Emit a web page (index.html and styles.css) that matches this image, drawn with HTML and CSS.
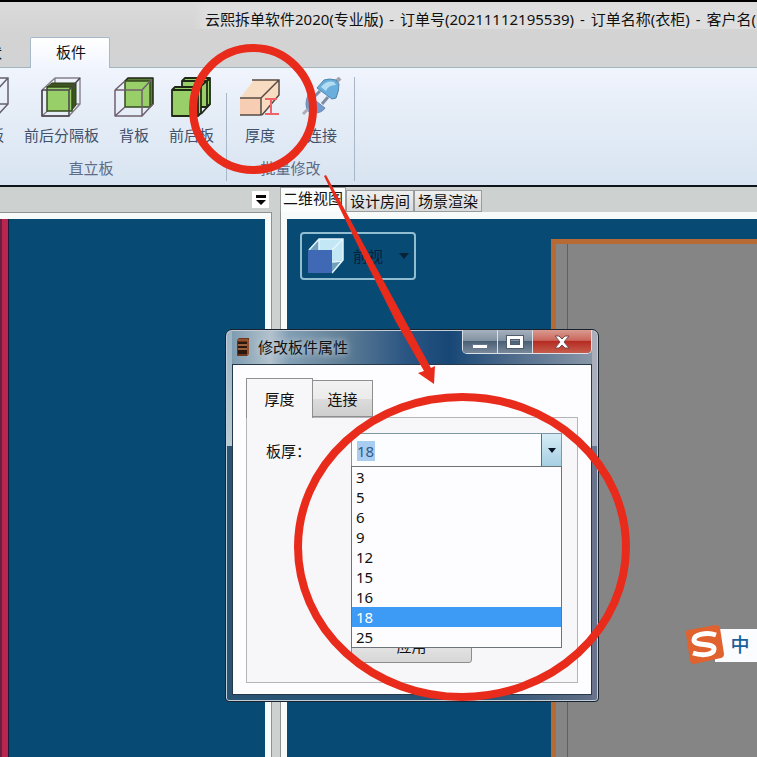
FILE: index.html
```html
<!DOCTYPE html>
<html lang="zh-CN">
<head>
<meta charset="utf-8">
<title>云熙拆单软件2020(专业版)</title>
<link rel="stylesheet" href="styles.css">
</head>
<body>
<div class="app">
  <header class="titlebar">
    <h1 class="app-title"><span class="title-glow">云熙拆单软件2020(专业版)<span class="dash"> - </span>订单号(20211112195539)<span class="dash"> - </span>订单名称(衣柜)<span class="dash"> - </span>客户名(</span></h1>
    <nav class="ribbon-tabs">
      <button class="ribbon-tab ribbon-tab-cut" type="button">状</button>
      <button class="ribbon-tab active" type="button">板件</button>
    </nav>
  </header>

  <section class="ribbon">
    <div class="group group-boards">
      <div class="tools">
        <button class="tool" type="button">
          <svg width="40" height="40" viewBox="0 0 40 40" fill="none" stroke="#66606e"><path d="M14 1H39V27L28 39H1V13L14 1V27M1 13H28L39 1M28 13V39M1 39L14 27H39" stroke-width="1.5"/></svg>
          <span>侧板</span>
        </button>
        <button class="tool" type="button">
          <svg width="40" height="40" viewBox="0 0 40 40" fill="none" stroke-linejoin="round"><path d="M14 1H39V27L28 39H1V13L14 1V27H39M1 39L14 27" stroke="#86808a" stroke-width="1.4"/><path d="M6 10L11 6H35V28L30 34V10Z" fill="#3d5520" stroke="#2c3819"/><path d="M6 10H31V34H6Z" fill="#98cf69" stroke="#354a1c" stroke-width="1.5"/><path d="M1 13H28L39 1M28 13V39H1V13" stroke="#4a444e" stroke-width="1.5"/></svg>
          <span>前后分隔板</span>
        </button>
        <button class="tool" type="button">
          <svg width="40" height="40" viewBox="0 0 40 40" fill="none" stroke-linejoin="round"><path d="M11 4L14 1H39V27L36 30" fill="#5c7c39" stroke="#202615" stroke-width="1.5"/><path d="M11 4H36V30H11Z" fill="#98cf69" stroke="#344a1f" stroke-width="1.5"/><path d="M1 13L11 4M1 13H28L38 2M28 13V39L39 27M1 13V39H28M1 39L11 30" stroke="#70606f" stroke-width="1.5"/></svg>
          <span>背板</span>
        </button>
        <button class="tool" type="button">
          <svg width="40" height="40" viewBox="0 0 40 40" fill="none" stroke="#1f2915" stroke-width="1.8" stroke-linejoin="round"><path d="M11 4L14 1H39V27L36 30H11Z" fill="#98cf69"/><path d="M11 4H36V30M36 4L39 1"/><path d="M1 13L4 10H30V36L27 39H1Z" fill="#98cf69"/><path d="M1 13H27V39M27 13L30 10M30 37L39 27M29 10L38 2"/></svg>
          <span>前后板</span>
        </button>
      </div>
      <h2 class="group-label">直立板</h2>
    </div>
    <div class="group group-batch">
      <div class="tools">
        <button class="tool" type="button">
          <svg width="40" height="40" viewBox="0 0 40 40" fill="none" stroke-width="1.5"><path d="M0 21L14 3H39V18L22 38H0Z" fill="#f8dcc2"/><path d="M0 22H21V38H0Z" fill="#f7cdb4"/><path d="M12 3H39V18L22 38M0 21H21V38H0M21 21L39 3" stroke="#574b43"/><path d="M25 22H37M31 22V37M25 37H39" stroke="#ef6369" stroke-width="2"/></svg>
          <span>厚度</span>
        </button>
        <button class="tool" type="button">
          <svg width="40" height="40" viewBox="0 0 40 40" fill="none" stroke-linejoin="round"><path d="M33 6L38 1" stroke="#a5a4aa" stroke-width="4"/><path d="M15 11L22 3Q27 1 34 3L37 7Q37 14 34 21L30 22Z" fill="#69aedc" stroke="#4e85ad"/><path d="M19 10Q25 3 32 5L34 8Q26 8 24 14Z" fill="#b4ddf2"/><path d="M18 14L12 20M26 20L20 27" stroke="#7c8da5" stroke-width="3"/><path d="M6 18L23 31Q20 36 12 36L6 34Q2 28 6 18Z" fill="#729cce" stroke="#6687b5"/><path d="M6 32L1 37" stroke="#abacb8" stroke-width="3"/></svg>
          <span>连接</span>
        </button>
      </div>
      <h2 class="group-label">批量修改</h2>
    </div>
  </section>

  <main class="workspace">
    <section class="pane pane-left">
      <div class="pane-head">
        <button class="pane-menu" type="button" aria-label="窗格菜单">
          <svg width="12" height="12" viewBox="0 0 12 12"><path d="M1 1H11V4H1ZM1 6H11L6 11Z" fill="#080808"/></svg>
        </button>
      </div>
      <div class="frame"><div class="canvas canvas-side"></div></div>
    </section>
    <section class="pane pane-right">
      <nav class="view-tabs">
        <button class="view-tab active" type="button">二维视图</button>
        <button class="view-tab" type="button">设计房间</button>
        <button class="view-tab" type="button">场景渲染</button>
      </nav>
      <div class="frame">
        <div class="canvas canvas-main">
          <button class="view-button" type="button">
            <svg width="36" height="36" viewBox="0 0 36 36"><path d="M1 12L11 1H35V22L24 35V12Z" fill="#c3e7f4"/><path d="M11 1V12H1ZM24 24L34 22L24 35Z" fill="#6fa3bd"/><path d="M1 12L11 1H35V22L24 35M24 12L35 1M11 1V12M24 24L34 23" fill="none" stroke="#e4f5fb" stroke-width="1.5"/><path d="M0 12H24V35H0Z" fill="#3f69b5"/></svg>
            <span>前视</span>
            <svg width="10" height="6" viewBox="0 0 10 6"><path d="M0 0H10L5 6Z" fill="#082238"/></svg>
          </button>
          <div class="board"><div class="board-inner"></div></div>
        </div>
      </div>
    </section>
  </main>

  <section class="dialog" role="dialog" aria-labelledby="dialog-title">
    <header class="dialog-head">
      <svg width="14" height="18" viewBox="0 0 14 18"><path d="M1 2L3 0H13V16L11 18H1Z" fill="#6d351b"/><path d="M2 4H11V16H2Z" fill="#2c170f"/><path d="M2 7H11M2 11H11" stroke="#c0794b" stroke-width="1.5"/><path d="M1 2H12V17" fill="none" stroke="#b46b40"/></svg>
      <h2 id="dialog-title">修改板件属性</h2>
      <div class="window-buttons">
        <button class="win-min" type="button" aria-label="最小化"><svg width="16" height="14" viewBox="0 0 16 14"><path d="M0.500 9.500H15.500V13.500H0.500Z" fill="#fff" stroke="#65748a"/></svg></button>
        <button class="win-max" type="button" aria-label="最大化"><svg width="18" height="14" viewBox="0 0 18 14"><path d="M2.500 2.500H15.500V11.500H2.500Z" fill="none" stroke="#4f5b6c" stroke-width="5"/><path d="M2.500 2.500H15.500V11.500H2.500Z" fill="none" stroke="#fff" stroke-width="3"/></svg></button>
        <button class="win-close" type="button" aria-label="关闭"><svg width="16" height="14" viewBox="0 0 16 14"><path d="M1 1H5L8 4L11 1H15L10 7L15 13H11L8 10L5 13H1L6 7Z" fill="#fff" stroke="#79494c"/></svg></button>
      </div>
    </header>
    <div class="dialog-body">
      <nav class="dialog-tabs">
        <button class="dialog-tab active" type="button">厚度</button>
        <button class="dialog-tab" type="button">连接</button>
      </nav>
      <form class="dialog-panel">
        <label for="thickness">板厚：</label>
        <div class="combo">
          <div class="combo-field">
            <input id="thickness" type="text" value="18">
            <button type="button" aria-label="展开"><svg width="8" height="5" viewBox="0 0 8 5"><path d="M0 0H8L4 5Z" fill="#061424"/></svg></button>
          </div>
          <select class="combo-list" size="9" aria-label="板厚">
            <option>3</option>
            <option>5</option>
            <option>6</option>
            <option>9</option>
            <option>12</option>
            <option>15</option>
            <option>16</option>
            <option selected>18</option>
            <option>25</option>
          </select>
        </div>
        <button class="apply" type="button">应用</button>
      </form>
    </div>
  </section>

  <aside class="ime">
    <svg width="40" height="40" viewBox="0 0 40 40"><path d="M3 5L31 0Q34 0 35 3L39 29Q39 32 36 33L9 39Q6 39 5 36L1 9Q0 6 3 5Z" fill="#e0622f"/><path d="M31 10C22 7 9 9 9 15C9 22 29 17 29 24C29 30 17 31 8 28" fill="none" stroke="#fff" stroke-width="5"/></svg>
    <button type="button">中</button>
  </aside>

  <svg class="marks" width="757" height="757" viewBox="0 0 757 757" aria-hidden="true">
    <g fill="none" stroke="#e92b1c" stroke-width="8">
      <ellipse cx="253" cy="109" rx="60" ry="61"/>
      <ellipse cx="462" cy="547" rx="164" ry="150"/>
    </g>
    <path d="M324 176L326 175L371 258L406 322L431 368L435 366L434 384L418 373L424 371L396 322L364 258Z" fill="#e92b1c"/>
  </svg>
</div>
</body>
</html>
```
FILE: styles.css
```css
* {
  box-sizing: border-box;
}

body {
  margin: 0;
  font: 15px/20px "Noto Sans", "Noto Sans CJK SC", sans-serif;
  color: #111;
}

button,
input,
select {
  margin: 0;
  padding: 0;
  border: 0;
  background: none;
  color: inherit;
  font: inherit;
}

svg {
  display: block;
  flex: none;
}

h1,
h2 {
  margin: 0;
  font: inherit;
}

.app {
  position: relative;
  display: flex;
  flex-direction: column;
  height: 100vh;
  overflow: hidden;
}

/* Title bar and ribbon */
.titlebar {
  border-top: 2px solid #000;
  border-bottom: 1px solid #a3b4bd;
  background: linear-gradient(#dadada, #d4d3d4 50%, #d2d3d4);
}

.app-title {
  padding: 7px 0 0 205px;
  overflow: hidden;
  white-space: nowrap;
}

.title-glow {
  background: #dedede;
  box-shadow: 0 0 8px 6px #dedede;
}

.dash {
  margin: 0 2px;
}

.ribbon-tabs {
  display: flex;
  align-items: flex-end;
  gap: 28px;
  margin: 8px 0 -1px;
}

.ribbon-tab {
  width: 80px;
  height: 31px;
  padding: 0 0 2px 2px;
}

.ribbon-tab-cut {
  width: 15px;
  margin-left: -13px;
  padding-left: 0;
}

.ribbon-tab.active {
  border: 1px solid #a9b9cc;
  border-bottom: 0;
  border-radius: 2px 2px 0 0;
  background: linear-gradient(#fff, #f1f5fe);
}

.ribbon {
  display: flex;
  padding: 9px 0 4px;
  border-bottom: 2px solid #10151c;
  background: linear-gradient(#f0f4fd, #e5edf7 40%, #d8e4f1);
  color: #41506b;
}

.group {
  display: flex;
  flex-direction: column;
  justify-content: space-between;
  height: 104px;
  border-right: 1px solid #a8b7c7;
}

.group-boards {
  width: 271px;
  margin-left: -44px;
  border-image: linear-gradient(transparent 16%, #a8b7c7 16%) 1;
}

.group-batch {
  width: 128px;
}

.tools {
  display: flex;
  justify-content: flex-end;
  gap: 15px;
  padding-right: 12px;
}

.group-batch .tools {
  gap: 22px;
  padding-right: 12px;
}

.tool {
  display: flex;
  flex: none;
  flex-direction: column;
  align-items: center;
  gap: 8px;
  min-width: 40px;
}

.group-label {
  padding-bottom: 3px;
  color: #5c6c89;
  text-align: center;
}

/* Work area */
.workspace {
  display: flex;
  flex: 1;
  gap: 8px;
  min-height: 0;
  background: #cdd2d1;
}

.pane {
  display: flex;
  flex-direction: column;
}

.pane-left {
  flex: 0 0 272px;
}

.pane-right {
  flex: 1;
  min-width: 0;
}

.pane-head {
  display: flex;
  justify-content: flex-end;
  height: 25px;
  padding: 4px 3px;
}

.pane-menu {
  display: grid;
  place-items: center;
  width: 17px;
  background: #fff;
}

.frame {
  display: flex;
  flex: 1;
  min-height: 0;
  border: 1px solid #8b9492;
  border-width: 1px 1px 0 0;
  background: #f7fbfa;
  padding: 6px 6px 0 0;
}

.pane-right .frame {
  border-width: 0 0 0 1px;
  padding: 7px 0 0 6px;
}

.canvas {
  flex: 1;
  background: #074a74;
}

.canvas-side {
  border-left: 2px solid #65213d;
  background: linear-gradient(90deg, #b92550 6px, #161c38 6px 7px, #074a74 7px);
}

.canvas-main {
  position: relative;
  display: flex;
  padding: 20px 0 0 264px;
}

.board {
  flex: 1;
  border: 5px solid #b86a34;
  border-width: 5px 0 0 5px;
  background: #858585;
  padding-left: 11px;
}

.board-inner {
  height: 100%;
  border-left: 1px solid #606060;
}

.view-tabs {
  display: flex;
  align-items: flex-end;
  height: 25px;
}

.view-tab {
  height: 22px;
  padding: 0 3px;
  border: 1px solid #9a9d9d;
  background: linear-gradient(#efefef, #d8dad9);
}

.view-tab.active {
  height: 25px;
  border-bottom: 0;
  padding: 0 2px 4px;
  background: #fbfdfd;
}

.view-button {
  position: absolute;
  top: 13px;
  left: 13px;
  display: flex;
  align-items: center;
  gap: 9px;
  height: 48px;
  padding: 0 5px 0 6px;
  border: 2px solid #91bdd0;
  border-radius: 4px;
  color: #092039;
}

.view-button span {
  margin-right: 7px;
}

/* Property dialog */
.dialog {
  position: absolute;
  top: 329px;
  left: 225px;
  width: 374px;
  padding: 0 6px 6px;
  border: 1px solid #18232f;
  border-radius: 7px 7px 4px 4px;
  background:
    linear-gradient(#9ab3c3, #b7cbd3 116px, transparent 116px) left / 6px 100% no-repeat,
    linear-gradient(#a9aeb8, #a9afbe 116px, #69738b 116px) right / 6px 100% no-repeat,
    linear-gradient(90deg, #7696ab, #b3c2cd 12%, #829eb3 17%, #648197 30%, #2b5683 48%, #174776 60%, #496789 75%, #8e99a9) top / 100% 36px no-repeat,
    linear-gradient(90deg, #2a5474, #285477 70%, #656f86);
  box-shadow: inset 0 0 0 1px #c1ced8;
}

.dialog-head {
  display: flex;
  align-items: center;
  gap: 8px;
  height: 34px;
  padding-left: 4px;
}

.dialog-head h2 {
  flex: 1;
  text-shadow: 0 0 6px #b9cbd8, 0 0 8px #b9cbd8;
}

.window-buttons {
  display: flex;
  align-self: flex-start;
  height: 24px;
  border: 1px solid #dae1e8;
  border-top: 0;
  border-radius: 0 0 5px 5px;
  overflow: hidden;
}

.window-buttons button {
  display: grid;
  place-items: center;
  width: 35px;
  border-right: 1px solid #dae1e8;
  background: linear-gradient(#a6b1be, #81909f 48%, #4b6076 50%, #79899a);
}

.window-buttons .win-close {
  width: 58px;
  border-right: 0;
  background: linear-gradient(#d99b91, #cb665b 45%, #b62c22 50%, #c65c4c);
}

.dialog-body {
  padding: 13px 13px 11px;
  border: 1px solid #26394a;
  background: #fdfcfe;
}

.dialog-tabs {
  display: flex;
  align-items: flex-end;
}

.dialog-tab {
  width: 60px;
  height: 37px;
  border: 1px solid #8f8f8f;
  border-left: 0;
  background: linear-gradient(#f2f2f2, #ebebeb 50%, #dcdcdc 52%, #cecece);
}

.dialog-tab.active {
  z-index: 1;
  width: 67px;
  height: 40px;
  margin-bottom: -1px;
  border-left: 1px solid #8f8f8f;
  border-bottom: 0;
  background: #f7f6f8;
}

.dialog-panel {
  display: grid;
  grid-template-columns: 85px minmax(0, 1fr);
  row-gap: 161px;
  padding: 15px 15px 19px 19px;
  border: 1px solid #b5b5b9;
  background: #f7f6f8;
}

.dialog-panel label {
  align-self: center;
}

.combo {
  position: relative;
}

.combo-field {
  display: flex;
  height: 35px;
  border: 1px solid #7d97a4;
  background: #fcfdff;
}

.combo-field input {
  flex: 1;
  min-width: 0;
  padding: 6px 5px;
  background: linear-gradient(#a9cdf1, #a9cdf1) 5px 7px / 18px 20px no-repeat;
  color: #315b8a;
}

.combo-field button {
  display: grid;
  place-items: center;
  width: 20px;
  border-left: 1px solid #44758c;
  background: linear-gradient(#d6edf7, #a5cee2);
}

.combo-list {
  position: absolute;
  top: 33px;
  left: 0;
  z-index: 1;
  width: 100%;
  height: 182px;
  border: 1px solid #6d7479;
  border-radius: 0;
  outline: 0;
  background: #fdfdff;
  overflow: hidden;
}

.combo-list option {
  min-height: 0;
  height: 20px;
  padding: 0 4px;
  color: #111;
  font: 15px/20px "Noto Sans", sans-serif;
}

.combo-list option:checked {
  background: #3d9af5 linear-gradient(#3d9af5, #3d9af5);
  color: #fff;
}

.apply {
  grid-column: 2;
  width: 121px;
  height: 34px;
  border: 1px solid #8d8d8d;
  border-radius: 3px;
  background: linear-gradient(#f0f0f0, #d7d7d7);
}

/* Input method bar */
.ime {
  position: absolute;
  top: 625px;
  right: 0;
  display: flex;
  align-items: center;
}

.ime svg {
  z-index: 1;
}

.ime button {
  width: 42px;
  height: 33px;
  margin-left: -10px;
  padding-left: 8px;
  background: #fbfcff;
  color: #17609c;
  font-size: 19px;
  font-weight: 500;
}

.marks {
  position: absolute;
  top: 0;
  left: 0;
  pointer-events: none;
  z-index: 2;
}
```
